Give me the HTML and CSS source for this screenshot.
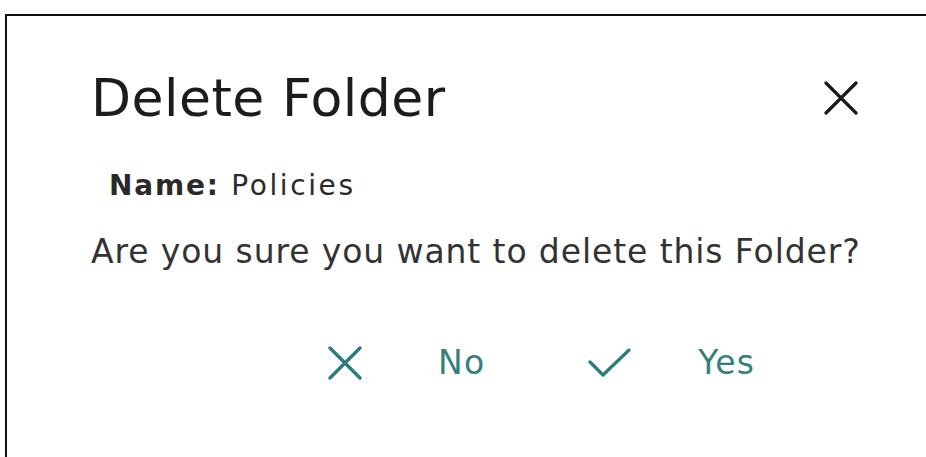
FILE: index.html
```html
<!DOCTYPE html>
<html lang="en">
<head>
<meta charset="utf-8">
<title>Delete Folder</title>
<link rel="stylesheet" href="styles.css">
</head>
<body>
<div class="dialog">
  <div class="dialog-header">
    <h1 class="dialog-title">Delete Folder</h1>
    <button class="close-btn" aria-label="Close">
      <svg width="34" height="34" viewBox="0 0 34 34"><path d="M2 2 L32 32 M32 2 L2 32" stroke="#1a1a1a" stroke-width="3.2" stroke-linecap="round" fill="none"/></svg>
    </button>
  </div>
  <div class="dialog-body">
    <p class="item-name"><span class="label">Name:</span> Policies</p>
    <p class="question">Are you sure you want to delete this Folder?</p>
  </div>
  <div class="dialog-actions">
    <button class="action action-no">
      <svg width="34" height="34" viewBox="0 0 34 34"><path d="M2 2 L32 32 M32 2 L2 32" stroke="#2b7d7b" stroke-width="3.4" stroke-linecap="round" fill="none"/></svg>
      <span class="action-label">No</span>
    </button>
    <button class="action action-yes">
      <svg width="43" height="30" viewBox="0 0 43 30"><path d="M2 14 L15 27 L41 2" stroke="#2b7d7b" stroke-width="3.2" stroke-linecap="round" stroke-linejoin="round" fill="none"/></svg>
      <span class="action-label">Yes</span>
    </button>
  </div>
</div>
</body>
</html>
```
FILE: styles.css
```css
html, body {
  margin: 0;
  height: 100%;
  background: #ffffff;
}

body {
  font-family: "DejaVu Sans", "Open Sans", sans-serif;
  color: #1e1e1e;
  padding: 14px 0 0 5px;
  box-sizing: border-box;
  overflow: hidden;
}

.dialog {
  height: 100%;
  border-top: 2px solid #111;
  border-left: 2px solid #111;
  box-sizing: border-box;
  padding: 50px 0 0 84px;
}

.dialog-header {
  display: flex;
  align-items: center;
  justify-content: space-between;
  margin-right: 68px;
}

.dialog-title {
  margin: 0;
  font-size: 52px;
  letter-spacing: 0.5px;
  font-weight: normal;
  line-height: 64px;
  color: #1c1c1c;
}

.close-btn {
  border: 0;
  background: none;
  padding: 0;
  display: flex;
}

.dialog-body {
  padding-top: 35px;
}

.item-name {
  margin: 0 0 0 18px;
  font-size: 28px;
  letter-spacing: 2.6px;
  line-height: 42px;
  color: #2a2a2a;
  white-space: nowrap;
}

.label {
  font-weight: bold;
  letter-spacing: 1.8px;
}

.question {
  margin: 23px 0 0 0;
  font-size: 33px;
  letter-spacing: 0.9px;
  line-height: 44px;
  color: #333;
  white-space: nowrap;
}

.dialog-actions {
  display: flex;
  gap: 103px;
  padding: 69px 0 0 237px;
}

.action {
  display: flex;
  align-items: center;
  border: 0;
  background: none;
  padding: 0;
  font-family: inherit;
}

.action-no {
  gap: 76px;
}

.action-yes {
  gap: 67px;
}

.action-label {
  font-size: 33px;
  letter-spacing: 1.2px;
  color: #35807e;
}
```
